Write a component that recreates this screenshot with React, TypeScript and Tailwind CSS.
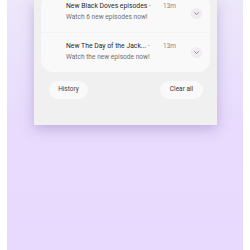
import React from "react";

function Chevron() {
  return (
    <div className="w-[11px] h-[11px] rounded-full bg-[#efedef] flex items-center justify-center shrink-0">
      <svg width="7" height="7" viewBox="0 0 8 8" fill="none">
        <path d="M1.8 3 L4 5.2 L6.2 3" stroke="#666" strokeWidth="0.8" strokeLinecap="round" strokeLinejoin="round" />
      </svg>
    </div>
  );
}

function Row({ title, sub, last }: { title: string; sub: string; last?: boolean }) {
  return (
    <div className={`h-[39px] flex items-center pl-[25px] pr-[8px] ${last ? "" : "border-b border-[#f4f2f4]"}`}>
      <div className="flex-1 flex flex-col gap-[2px] min-w-0 -mt-[2px]">
        <div className="flex items-center">
          <span className="text-[6.8px] leading-[9px] text-[#2a2a2a] font-normal w-[90px] whitespace-nowrap">{title}</span>
          <span className="text-[6.5px] leading-[9px] text-[#888] ml-[7px]">13m</span>
        </div>
        <span className="text-[6.6px] leading-[9px] text-[#707070] whitespace-nowrap">{sub}</span>
      </div>
      <Chevron />
    </div>
  );
}

export default function App() {
  return (
    <div className="w-[250px] h-[250px] flex bg-white" style={{ fontFamily: "Roboto, 'Noto Sans', sans-serif" }}>
      <div className="w-[7px] bg-white" />
      <div className="flex-1 bg-gradient-to-b from-[#ede7fa] via-[#e8dbfd] via-50% to-[#e8dafe] overflow-hidden">
        <div className="ml-[27px] w-[183px] h-[125px] bg-[#f0f0f0] shadow-[0_4px_12px_rgba(120,90,170,0.35)] px-[7px] overflow-hidden">
          <div className="-mt-[6px] bg-[#faf9fa] rounded-[12px]">
            <Row title="New Black Doves episodes ·" sub="Watch 6 new episodes now!" />
            <Row title="New The Day of the Jack... ·" sub="Watch the new episode now!" last />
          </div>
          <div className="flex justify-between mt-[9px] pl-[8px] pr-[7px]">
            <div className="w-[39px] h-[18px] rounded-full bg-[#faf9fa] flex items-center justify-center text-[6.5px] text-[#444]">History</div>
            <div className="w-[43px] h-[18px] rounded-full bg-[#faf9fa] flex items-center justify-center text-[6.5px] text-[#333]">Clear all</div>
          </div>
        </div>
      </div>
      <div className="w-[7px] bg-white" />
    </div>
  );
}
